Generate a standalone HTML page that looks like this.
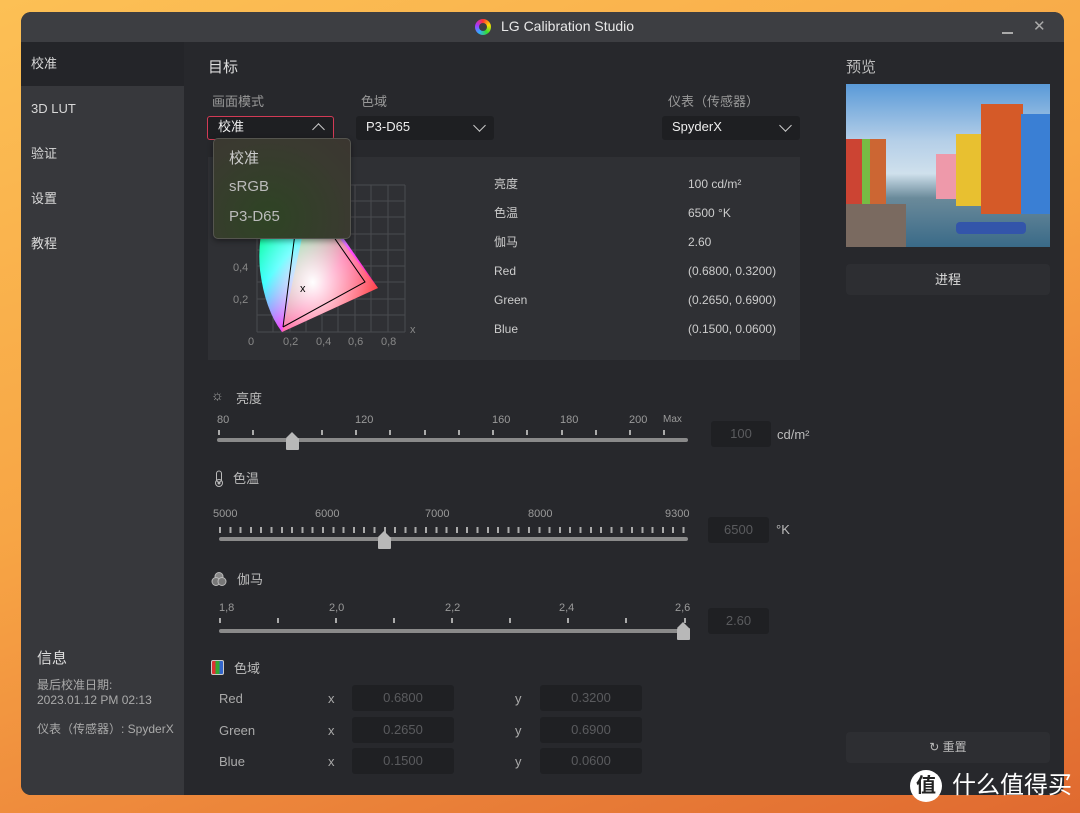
<!DOCTYPE html>
<html><head><meta charset="utf-8"><style>
*{margin:0;padding:0;box-sizing:border-box}
body{width:1080px;height:813px;overflow:hidden;position:relative;font-family:"Liberation Sans","Noto Sans CJK SC",sans-serif;background:linear-gradient(160deg,#fcc055 0%,#f7a545 45%,#ee8a3c 70%,#e06a30 100%)}
.a{position:absolute}
.win{left:21px;top:12px;width:1043px;height:783px;border-radius:10px;overflow:hidden;background:#27282c}
.title{left:0;top:0;width:1043px;height:30px;background:#3d3e42;color:#e8e8e8;font-size:14px}
.side{left:0;top:30px;width:163px;height:753px;background:#37383c}
.si{left:0;width:163px;height:44px;line-height:44px;padding-left:10px;color:#d8d8d8;font-size:13px}
.t{color:#c8c8c8;font-size:13px;white-space:nowrap}
.dd{background:#1e1f22;border-radius:3px;height:24px;color:#eee;font-size:13px;line-height:22px;padding-left:10px}
.chev{position:absolute;right:10px;top:5px;width:9px;height:9px;border-right:1.6px solid #ccc;border-bottom:1.6px solid #ccc;transform:rotate(45deg)}
.box{background:#1f2023;border-radius:3px;color:#5a5b5e;font-size:13px;text-align:center;line-height:26px;height:26px}
.track{height:4px;background:#8a8a8a;border-radius:2px}
.tick{position:absolute;width:2px;height:5px;background:#aaa}
.thumb{position:absolute;width:13px;height:12px;background:#b8b8b8;border-radius:1px}
.thumb:before{content:"";position:absolute;left:0;top:-6px;border-left:6.5px solid transparent;border-right:6.5px solid transparent;border-bottom:6px solid #b8b8b8}
.sl{color:#9a9a9a;font-size:11px}
</style></head><body>
<div class="a win">
 <div class="a title">
  <div class="a" style="left:454px;top:7px;width:16px;height:16px;border-radius:50%;background:conic-gradient(#f33,#fd0,#3d3,#3af,#a3f,#f33)"><div style="margin:4px;width:8px;height:8px;border-radius:50%;background:#3d3e42"></div></div>
  <div class="a" style="left:480px;top:6px">LG Calibration Studio</div>
  <div class="a" style="left:981px;top:20px;width:11px;height:1.5px;background:#aaa"></div>
  <div class="a" style="left:1012px;top:5px;color:#aaa;font-size:15px">✕</div>
 </div>
 <div class="a side">
  <div class="a si" style="top:0;background:#242529">校准</div>
  <div class="a si" style="top:45px">3D LUT</div>
  <div class="a si" style="top:90px">验证</div>
  <div class="a si" style="top:135px">设置</div>
  <div class="a si" style="top:180px">教程</div>
  <div class="a" style="left:16px;top:605px;color:#ddd;font-size:15px">信息</div>
  <div class="a t" style="left:16px;top:636px;font-size:12px;color:#aaa;line-height:15px">最后校准日期:<br>2023.01.12 PM 02:13</div>
  <div class="a t" style="left:16px;top:678px;font-size:12px;color:#aaa">仪表（传感器）: SpyderX</div>
 </div>
 <div class="a" style="left:187px;top:44px;color:#ddd;font-size:15px">目标</div>
 <div class="a t" style="left:191px;top:79px;color:#999">画面模式</div>
 <div class="a t" style="left:340px;top:79px;color:#999">色域</div>
 <div class="a t" style="left:647px;top:79px;color:#999">仪表（传感器）</div>
 <div class="a dd" style="left:186px;top:104px;width:127px;border:1.5px solid #d23a55;line-height:19px">校准<div class="chev" style="transform:rotate(225deg);top:8px"></div></div>
 <div class="a dd" style="left:335px;top:104px;width:138px">P3-D65<div class="chev"></div></div>
 <div class="a dd" style="left:641px;top:104px;width:138px">SpyderX<div class="chev"></div></div>
 <div class="a" style="left:187px;top:145px;width:592px;height:203px;background:#2f3034"></div>
 <svg class="a" style="left:199px;top:158px" width="200" height="185">
  <defs><radialGradient id="g" cx="0.45" cy="0.65" r="0.55"><stop offset="0" stop-color="#fff"/><stop offset="1" stop-color="#fff" stop-opacity="0"/></radialGradient>
  <linearGradient id="h" x1="0" y1="0" x2="1" y2="1"><stop offset="0" stop-color="#2f4"/><stop offset="0.35" stop-color="#0ff"/><stop offset="0.6" stop-color="#f0f"/><stop offset="1" stop-color="#f03"/></linearGradient></defs>
  <g stroke="#4a4b4f" stroke-width="1" fill="none">
   <path d="M37 15H185M37 31H185M37 47H185M37 64H185M37 80H185M37 96H185M37 112H185M37 129H185M37 145H185M37 162H185"/>
   <path d="M37 15V162M53 15V162M70 15V162M86 15V162M102 15V162M118 15V162M135 15V162M151 15V162M168 15V162M185 15V162"/>
  </g>
  <path d="M55 20 Q36 60 40 100 Q45 140 62 162 L158 118 L90 20Z" fill="url(#h)"/>
  <path d="M90 30 L158 118 L62 162Z" fill="#f90" opacity=".45"/>
  <path d="M55 20 Q36 60 40 100 Q45 140 62 162 L158 118 L90 20Z" fill="url(#g)"/>
  <path d="M63 157 L78 40 M95 40 L145 112 L63 157" stroke="#000" fill="none" stroke-width="1"/>
  <text x="80" y="122" font-size="11" fill="#000">x</text>
  <g fill="#888" font-size="11" font-family="Liberation Sans">
   <text x="13" y="101">0,4</text><text x="13" y="133">0,2</text>
   <text x="28" y="175">0</text><text x="63" y="175">0,2</text><text x="96" y="175">0,4</text><text x="128" y="175">0,6</text><text x="161" y="175">0,8</text>
   <text x="190" y="163">x</text>
  </g>
 </svg>
 <div class="a" style="left:192px;top:126px;width:138px;height:101px;border-radius:5px;border:1px solid #55554f;background:radial-gradient(ellipse at 40% 80%,#2e4424,#3a3a30 70%,#3b3630);box-shadow:0 2px 6px rgba(0,0,0,.4)">
  <div class="a" style="left:15px;top:8px;color:#ccc;font-size:15px">校准</div>
  <div class="a" style="left:15px;top:39px;color:#bbb;font-size:15px">sRGB</div>
  <div class="a" style="left:15px;top:69px;color:#bbb;font-size:15px">P3-D65</div>
 </div>
 <div class="a t" style="left:473px;top:158px;font-size:12px;line-height:29px;color:#ccc">亮度<br>色温<br>伽马<br>Red<br>Green<br>Blue</div>
 <div class="a t" style="left:667px;top:158px;font-size:12px;line-height:29px;color:#ccc">100 cd/m²<br>6500 °K<br>2.60<br>(0.6800, 0.3200)<br>(0.2650, 0.6900)<br>(0.1500, 0.0600)</div>
 <div class="a" style="left:190px;top:375px;color:#aaa;font-size:14px">☼</div>
 <div class="a t" style="left:215px;top:376px;color:#bbb">亮度</div>
 <div class="a sl" style="left:196px;top:402px;width:480px;height:14px">
  <span class="a" style="left:0">80</span><span class="a" style="left:138px">120</span><span class="a" style="left:275px">160</span><span class="a" style="left:343px">180</span><span class="a" style="left:412px">200</span><span class="a" style="left:446px;font-size:10px">Max</span></div>
 <div class="a" style="left:196px;top:418px;width:472px;height:8px">
  <i class="tick" style="left:1px"></i><i class="tick" style="left:35px"></i><i class="tick" style="left:104px"></i><i class="tick" style="left:138px"></i><i class="tick" style="left:172px"></i><i class="tick" style="left:207px"></i><i class="tick" style="left:241px"></i><i class="tick" style="left:275px"></i><i class="tick" style="left:309px"></i><i class="tick" style="left:344px"></i><i class="tick" style="left:378px"></i><i class="tick" style="left:412px"></i><i class="tick" style="left:446px"></i></div>
 <div class="a track" style="left:196px;top:426px;width:471px"></div>
 <div class="thumb" style="left:265px;top:426px"></div>
 <div class="a box" style="left:690px;top:409px;width:60px">100</div>
 <div class="a t" style="left:756px;top:415px;color:#bbb">cd/m²</div>
 <svg class="a" style="left:193px;top:458px" width="10" height="18"><rect x="2.5" y="1" width="5" height="11" rx="2.5" fill="none" stroke="#bbb"/><circle cx="5" cy="13" r="3.5" fill="none" stroke="#bbb"/><circle cx="5" cy="13" r="1.5" fill="#bbb"/></svg>
 <div class="a t" style="left:212px;top:456px;color:#bbb">色温</div>
 <div class="a sl" style="left:192px;top:496px;width:480px;height:14px">
  <span class="a" style="left:0">5000</span><span class="a" style="left:102px">6000</span><span class="a" style="left:212px">7000</span><span class="a" style="left:315px">8000</span><span class="a" style="left:452px">9300</span></div>
 <div class="a" style="left:198px;top:515px;width:472px;height:6px;background:repeating-linear-gradient(90deg,#aaa 0 2px,transparent 2px 10.3px)"></div>
 <div class="a track" style="left:198px;top:525px;width:469px"></div>
 <div class="thumb" style="left:357px;top:525px"></div>
 <div class="a box" style="left:687px;top:505px;width:61px">6500</div>
 <div class="a t" style="left:755px;top:510px;color:#bbb">°K</div>
 <svg class="a" style="left:190px;top:559px" width="16" height="16"><circle cx="8" cy="5.5" r="4" fill="#888" stroke="#bbb"/><circle cx="5" cy="10.5" r="4" fill="#777" stroke="#bbb"/><circle cx="11" cy="10.5" r="4" fill="#777" stroke="#bbb"/></svg>
 <div class="a t" style="left:216px;top:557px;color:#bbb">伽马</div>
 <div class="a sl" style="left:198px;top:590px;width:480px;height:14px">
  <span class="a" style="left:0">1,8</span><span class="a" style="left:110px">2,0</span><span class="a" style="left:226px">2,2</span><span class="a" style="left:340px">2,4</span><span class="a" style="left:456px">2,6</span></div>
 <div class="a" style="left:198px;top:606px;width:472px;height:6px">
  <i class="tick" style="left:0"></i><i class="tick" style="left:58px"></i><i class="tick" style="left:116px"></i><i class="tick" style="left:174px"></i><i class="tick" style="left:232px"></i><i class="tick" style="left:290px"></i><i class="tick" style="left:348px"></i><i class="tick" style="left:406px"></i><i class="tick" style="left:465px"></i></div>
 <div class="a track" style="left:198px;top:617px;width:469px"></div>
 <div class="thumb" style="left:656px;top:616px"></div>
 <div class="a box" style="left:687px;top:596px;width:61px">2.60</div>
 <div class="a" style="left:190px;top:648px;width:13px;height:15px;border:1px solid #ccc;border-radius:2px;background:linear-gradient(90deg,#d33 0 33%,#3a3 33% 66%,#36c 66%)"></div>
 <div class="a t" style="left:213px;top:646px;color:#bbb">色域</div>
 <div class="a t" style="left:198px;top:671px;color:#aaa;line-height:31.5px">Red<br>Green<br>Blue</div>
 <div class="a t" style="left:307px;top:671px;color:#aaa;line-height:31.5px">x<br>x<br>x</div>
 <div class="a t" style="left:494px;top:671px;color:#aaa;line-height:31.5px">y<br>y<br>y</div>
 <div class="a box" style="left:331px;top:673px;width:102px">0.6800</div>
 <div class="a box" style="left:331px;top:705px;width:102px">0.2650</div>
 <div class="a box" style="left:331px;top:736px;width:102px">0.1500</div>
 <div class="a box" style="left:519px;top:673px;width:102px">0.3200</div>
 <div class="a box" style="left:519px;top:705px;width:102px">0.6900</div>
 <div class="a box" style="left:519px;top:736px;width:102px">0.0600</div>
 <div class="a" style="left:825px;top:44px;color:#bbb;font-size:15px">预览</div>
 <div class="a" style="left:825px;top:72px;width:204px;height:163px;overflow:hidden;background:linear-gradient(180deg,#5a9ad8 0%,#b5cfe8 35%,#cfe0ec 55%,#6a8a9a 70%,#3a6a88 100%)">
  <div class="a" style="left:0;top:55px;width:40px;height:70px;background:linear-gradient(90deg,#c43 0 40%,#7b4 40% 60%,#c63 60%)"></div>
  <div class="a" style="left:90px;top:70px;width:40px;height:45px;background:linear-gradient(90deg,#e9a 0 50%,#d84 50%)"></div>
  <div class="a" style="left:110px;top:50px;width:30px;height:72px;background:#e8c030"></div>
  <div class="a" style="left:135px;top:20px;width:42px;height:110px;background:#d55a28"></div>
  <div class="a" style="left:175px;top:30px;width:29px;height:100px;background:#3a7fd4"></div>
  <div class="a" style="left:0;top:120px;width:60px;height:43px;background:#7a6a60"></div>
  <div class="a" style="left:110px;top:138px;width:70px;height:12px;background:#35a;border-radius:4px"></div>
 </div>
 <div class="a" style="left:825px;top:252px;width:204px;height:31px;background:#2d2e32;border-radius:4px;color:#ddd;font-size:13px;text-align:center;line-height:31px">进程</div>
 <div class="a" style="left:825px;top:720px;width:204px;height:31px;background:#2d2e32;border-radius:4px;color:#bbb;font-size:12px;text-align:center;line-height:31px">↻ 重置</div>
</div>
<div class="a" style="left:910px;top:770px;width:32px;height:32px;border-radius:50%;background:#fff;color:#222;font-size:20px;text-align:center;line-height:32px;font-weight:bold">值</div>
<div class="a" style="left:952px;top:770px;color:#fff;font-size:24px;line-height:32px">什么值得买</div>
</body></html>
